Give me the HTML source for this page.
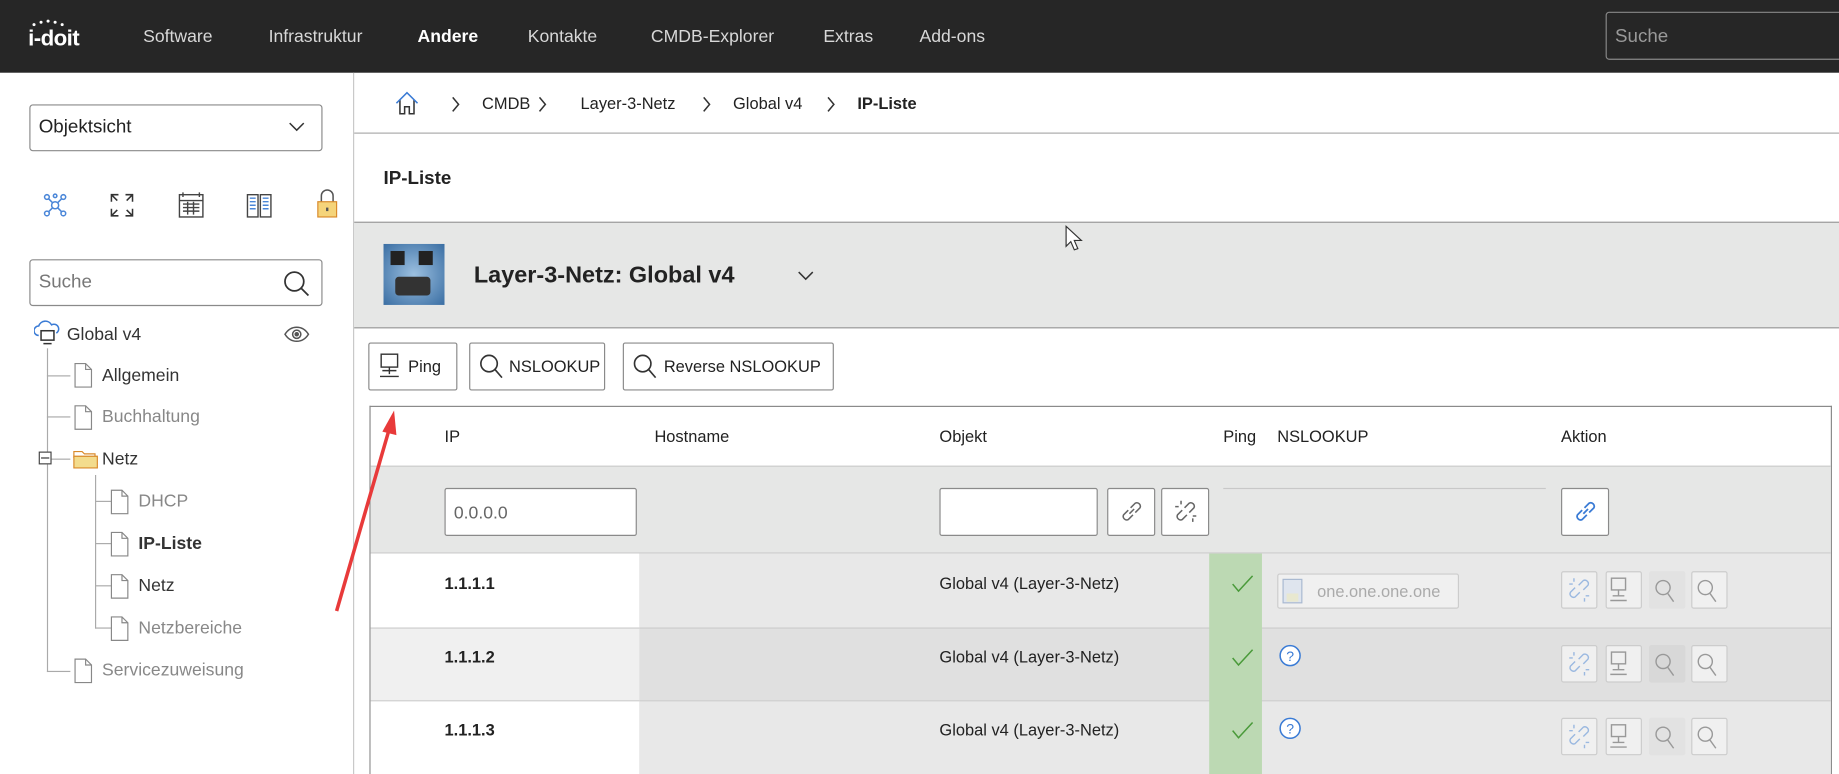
<!DOCTYPE html>
<html><head><meta charset="utf-8"><style>
html,body{margin:0;padding:0;width:1839px;height:774px;overflow:hidden;background:#fff}
#s{position:absolute;left:0;top:0;width:1568px;height:660px;transform:scale(1.17283);transform-origin:0 0;font-family:"Liberation Sans",sans-serif;font-size:15px;color:#222}
.a{position:absolute}
.t{position:absolute;white-space:nowrap;line-height:1}
.nav{color:#d8d8d8;font-size:15px;top:24px}
.box{position:absolute;border:1px solid #8a8a8a;border-radius:3px;background:#fff;box-sizing:border-box}
.btn{position:absolute;border:1px solid #8a8a8a;border-radius:2px;background:#fff;box-sizing:border-box}
.tr{color:#333}
.gray{color:#888}
.ln{position:absolute;background:#aaa}
.ib{position:absolute;width:31px;height:32px;border:1px solid #ccc;border-radius:2px;background:#f0f0f0;box-sizing:border-box}
</style></head><body><div id="s">
<div class="a" style="left:0;top:0;width:1568px;height:62px;background:#262626"></div>
<div class="t" style="left:24px;top:24px;color:#fff;font-size:19px;font-weight:bold;letter-spacing:-0.5px">i-doit</div>
<svg class="a" style="left:26px;top:16px" width="40" height="8"><circle cx="3" cy="5" r="1.3" fill="#fff"/><circle cx="9" cy="3" r="1.3" fill="#fff"/><circle cx="15" cy="2" r="1.3" fill="#fff"/><circle cx="21" cy="3" r="1.3" fill="#fff"/><circle cx="27" cy="5" r="1.3" fill="#fff"/></svg>
<div class="t nav" style="left:122px">Software</div>
<div class="t nav" style="left:229px">Infrastruktur</div>
<div class="t nav" style="left:356px;color:#fff;font-weight:bold">Andere</div>
<div class="t nav" style="left:450px">Kontakte</div>
<div class="t nav" style="left:555px">CMDB-Explorer</div>
<div class="t nav" style="left:702px">Extras</div>
<div class="t nav" style="left:784px">Add-ons</div>
<div class="a" style="left:1369px;top:10px;width:210px;height:41px;border:1px solid #888;border-radius:3px;box-sizing:border-box;background:#262626"></div>
<div class="t" style="left:1377px;top:24px;color:#999;font-size:16px">Suche</div>
<div class="a" style="left:301px;top:62px;width:1px;height:598px;background:#c8c8c8"></div>
<div class="box" style="left:25px;top:89px;width:250px;height:40px"></div>
<div class="t" style="left:33px;top:101px;font-size:16px">Objektsicht</div>
<svg class="a" style="left:246px;top:103px" width="14" height="10"><path d="M1 2l6 6 6-6" stroke="#333" fill="none" stroke-width="1.3"/></svg>
<svg class="a" style="left:36px;top:164px" width="22" height="22" fill="none" stroke="#4a86d8" stroke-width="1.3"><circle cx="11" cy="11" r="3"/><circle cx="4" cy="4" r="2"/><circle cx="18" cy="4" r="2"/><circle cx="4" cy="18" r="2"/><circle cx="18" cy="18" r="2"/><circle cx="11" cy="3" r="1.5"/><path d="M5.5 5.5l3.5 3.5M16.5 5.5l-3.5 3.5M5.5 16.5l3.5-3.5M16.5 16.5l-3.5-3.5"/></svg>
<svg class="a" style="left:93px;top:164px" width="22" height="22" fill="none" stroke="#333" stroke-width="1.3"><path d="M2 8V2h6M2 2l5 5M20 8V2h-6M20 2l-5 5M2 14v6h6M2 20l5-5M20 14v6h-6M20 20l-5-5"/></svg>
<svg class="a" style="left:151px;top:163px" width="24" height="24" fill="none" stroke="#444" stroke-width="1.2"><rect x="2" y="3" width="20" height="19"/><path d="M2 8h20M5 1v4M19 1v4M5 11h14M5 14h14M5 17h14M9 9v11M14 9v11"/></svg>
<svg class="a" style="left:209px;top:163px" width="24" height="24" fill="none" stroke="#444" stroke-width="1.2"><path d="M2 3h9v19H2zM13 3h9v19h-9z"/><path d="M4 6h5M4 9h5M4 12h5M4 15h5M15 6h5M15 9h5M15 12h5M15 15h5" stroke="#4a86d8"/></svg>
<svg class="a" style="left:269px;top:161px" width="20" height="26" fill="none"><path d="M5 11V6a5 5 0 0110 0v5" stroke="#555" stroke-width="1.3"/><rect x="2" y="11" width="16" height="13" fill="#f5d47a" stroke="#d98a2a"/><rect x="9" y="16" width="2" height="3" fill="#555"/></svg>
<div class="box" style="left:25px;top:221px;width:250px;height:40px"></div>
<div class="t" style="left:33px;top:233px;font-size:16px;color:#777">Suche</div>
<svg class="a" style="left:241px;top:230px" width="24" height="24" fill="none" stroke="#333" stroke-width="1.5"><circle cx="10" cy="10" r="8"/><path d="M16 16l6 6"/></svg>
<svg class="a" style="left:29px;top:273px" width="24" height="22" fill="none" stroke="#3a7bd5" stroke-width="1.3"><path d="M4 13a4 4 0 010-8 6 6 0 0111-1 4 4 0 014 7"/><rect x="6" y="9" width="11" height="8" stroke="#333"/><path d="M8 20h7" stroke="#333"/></svg>
<div class="t tr" style="left:57px;top:278px">Global v4</div>
<svg class="a" style="left:242px;top:278px" width="22" height="14" fill="none" stroke="#555" stroke-width="1.3"><path d="M1 7c5-8 15-8 20 0-5 8-15 8-20 0z"/><circle cx="11" cy="7" r="3.5"/><circle cx="11" cy="7" r="1.3" fill="#555"/></svg>
<div class="ln" style="left:40px;top:297px;width:1px;height:276px"></div>
<div class="ln" style="left:40px;top:572px;width:20px;height:1px"></div>
<div class="ln" style="left:40px;top:320px;width:20px;height:1px"></div>
<div class="ln" style="left:40px;top:355px;width:20px;height:1px"></div>
<div class="ln" style="left:40px;top:391px;width:20px;height:1px"></div>
<div class="a" style="left:33px;top:385px;width:11px;height:11px;border:1px solid #444;background:#fff;box-sizing:border-box"></div>
<div class="a" style="left:35px;top:390px;width:7px;height:1px;background:#333"></div>
<div class="ln" style="left:81px;top:405px;width:1px;height:131px"></div>
<div class="ln" style="left:81px;top:427px;width:20px;height:1px"></div>
<div class="ln" style="left:81px;top:463px;width:20px;height:1px"></div>
<div class="ln" style="left:81px;top:499px;width:20px;height:1px"></div>
<div class="ln" style="left:81px;top:535px;width:20px;height:1px"></div>
<svg width="0" height="0" style="position:absolute"><defs><g id="doc"><path d="M1 1h9l5 5v15H1z" fill="#fff" stroke="#888"/><path d="M10 1v5h5" fill="none" stroke="#888"/></g></defs></svg>
<svg class="a" style="left:63px;top:309px" width="16" height="22"><use href="#doc"/></svg>
<svg class="a" style="left:63px;top:345px" width="16" height="22"><use href="#doc"/></svg>
<svg class="a" style="left:63px;top:561px" width="16" height="22"><use href="#doc"/></svg>
<svg class="a" style="left:94px;top:417px" width="16" height="22"><use href="#doc"/></svg>
<svg class="a" style="left:94px;top:453px" width="16" height="22"><use href="#doc"/></svg>
<svg class="a" style="left:94px;top:489px" width="16" height="22"><use href="#doc"/></svg>
<svg class="a" style="left:94px;top:525px" width="16" height="22"><use href="#doc"/></svg>
<svg class="a" style="left:62px;top:381px" width="22" height="19"><path d="M1 4h7l2 2h9v3H1z" fill="#fff" stroke="#d98a2a"/><path d="M1 8h20v10H1z" fill="#f3dc8d" stroke="#d98a2a"/></svg>
<div class="t tr" style="left:87px;top:313px">Allgemein</div>
<div class="t gray" style="left:87px;top:348px">Buchhaltung</div>
<div class="t tr" style="left:87px;top:384px">Netz</div>
<div class="t gray" style="left:118px;top:420px">DHCP</div>
<div class="t tr" style="left:118px;top:456px;font-weight:bold">IP-Liste</div>
<div class="t tr" style="left:118px;top:492px">Netz</div>
<div class="t gray" style="left:118px;top:528px">Netzbereiche</div>
<div class="t gray" style="left:87px;top:564px">Servicezuweisung</div>
<svg class="a" style="left:336px;top:77px" width="22" height="22" fill="none" stroke="#333" stroke-width="1.3"><path d="M5 8v12h4v-6h4v6h4V8"/><path d="M2 11l9-9 9 9" stroke="#3a7bd5"/></svg>
<svg width="0" height="0" style="position:absolute"><defs><path id="chv" d="M1 1l5 6-5 6" stroke="#333" fill="none" stroke-width="1.3"/></defs></svg>
<svg class="a" style="left:385px;top:82px" width="8" height="14"><use href="#chv"/></svg>
<div class="t" style="left:411px;top:81px;font-size:14px">CMDB</div>
<svg class="a" style="left:459px;top:82px" width="8" height="14"><use href="#chv"/></svg>
<div class="t" style="left:495px;top:81px;font-size:14px">Layer-3-Netz</div>
<svg class="a" style="left:599px;top:82px" width="8" height="14"><use href="#chv"/></svg>
<div class="t" style="left:625px;top:81px;font-size:14px">Global v4</div>
<svg class="a" style="left:705px;top:82px" width="8" height="14"><use href="#chv"/></svg>
<div class="t" style="left:731px;top:81px;font-size:14px;font-weight:bold">IP-Liste</div>
<div class="a" style="left:302px;top:113px;width:1266px;height:1px;background:#aaa"></div>
<div class="t" style="left:327px;top:145px;font-size:16px;font-weight:bold">IP-Liste</div>
<div class="a" style="left:302px;top:189px;width:1266px;height:91px;background:#e6e7e6;border-top:1px solid #999;border-bottom:1px solid #999;box-sizing:border-box"></div>
<div class="a" style="left:327px;top:208px;width:52px;height:52px;background:radial-gradient(circle at 50% 50%,#9cc0e0,#3a6ea3)"></div>
<div class="a" style="left:337px;top:236px;width:30px;height:16px;background:#333;border-radius:3px"></div>
<div class="a" style="left:333px;top:214px;width:12px;height:12px;background:#222"></div>
<div class="a" style="left:357px;top:214px;width:12px;height:12px;background:#222"></div>
<div class="t" style="left:404px;top:225px;font-size:20px;font-weight:bold">Layer-3-Netz: Global v4</div>
<svg class="a" style="left:680px;top:230px" width="14" height="10"><path d="M1 2l6 6 6-6" stroke="#333" fill="none" stroke-width="1.3"/></svg>
<svg class="a" style="left:908px;top:192px" width="18" height="24"><path d="M1 1v17l4-4 3 7 3-1-3-7h6z" fill="#fff" stroke="#333"/></svg>
<div class="btn" style="left:314px;top:292px;width:76px;height:41px"></div>
<svg class="a" style="left:323px;top:301px" width="18" height="22" fill="none" stroke="#333" stroke-width="1.2"><rect x="2" y="1" width="14" height="11"/><path d="M9 12v6M3 15h12M1 20h16"/></svg>
<div class="t" style="left:348px;top:305px;font-size:14px">Ping</div>
<div class="btn" style="left:400px;top:292px;width:116px;height:41px"></div>
<svg class="a" style="left:408px;top:301px" width="22" height="24" fill="none" stroke="#333" stroke-width="1.4"><circle cx="9" cy="9" r="7"/><path d="M14 14l6 7"/></svg>
<div class="t" style="left:434px;top:305px;font-size:14px">NSLOOKUP</div>
<div class="btn" style="left:531px;top:292px;width:180px;height:41px"></div>
<svg class="a" style="left:539px;top:301px" width="22" height="24" fill="none" stroke="#333" stroke-width="1.4"><circle cx="9" cy="9" r="7"/><path d="M14 14l6 7"/></svg>
<div class="t" style="left:566px;top:305px;font-size:14px">Reverse NSLOOKUP</div>
<div class="a" style="left:315px;top:346px;width:1247px;height:314px;border:1px solid #888;border-bottom:none;box-sizing:border-box"></div>
<div class="t" style="left:379px;top:365px;font-size:14px">IP</div>
<div class="t" style="left:558px;top:365px;font-size:14px">Hostname</div>
<div class="t" style="left:801px;top:365px;font-size:14px">Objekt</div>
<div class="t" style="left:1043px;top:365px;font-size:14px">Ping</div>
<div class="t" style="left:1089px;top:365px;font-size:14px">NSLOOKUP</div>
<div class="t" style="left:1331px;top:365px;font-size:14px">Aktion</div>
<div class="a" style="left:316px;top:397px;width:1245px;height:75px;background:#e6e7e6;border-top:1px solid #ccc;border-bottom:1px solid #ccc;box-sizing:border-box"></div>
<div class="box" style="left:379px;top:416px;width:164px;height:41px;border-radius:2px"></div>
<div class="t" style="left:387px;top:430px;color:#666;font-size:15px">0.0.0.0</div>
<div class="box" style="left:801px;top:416px;width:135px;height:41px;border-radius:2px"></div>
<div class="btn" style="left:944px;top:416px;width:41px;height:41px"></div>
<svg class="a" style="left:954px;top:425px" width="22" height="22" fill="none" stroke="#666" stroke-width="1.3"><path d="M9 13l4-4M8 10l-4 4a3 3 0 004 4l4-4M14 12l4-4a3 3 0 00-4-4l-4 4"/></svg>
<div class="btn" style="left:990px;top:416px;width:41px;height:41px"></div>
<svg class="a" style="left:1000px;top:425px" width="22" height="22" fill="none" stroke="#666" stroke-width="1.3"><path d="M8 10l-4 4a3 3 0 004 4l4-4M14 12l4-4a3 3 0 00-4-4l-4 4M2 7h3M7 2v3M17 20v-3M20 15h-3"/></svg>
<div class="a" style="left:1043px;top:416px;width:275px;height:1px;background:#c8c8c8"></div>
<div class="btn" style="left:1331px;top:416px;width:41px;height:41px"></div>
<svg class="a" style="left:1341px;top:425px" width="22" height="22" fill="none" stroke="#3a7bd5" stroke-width="1.5"><path d="M9 13l4-4M8 10l-4 4a3 3 0 004 4l4-4M14 12l4-4a3 3 0 00-4-4l-4 4"/></svg>
<div class="a" style="left:316px;top:472px;width:229px;height:63px;background:#fff"></div>
<div class="a" style="left:545px;top:472px;width:1016px;height:63px;background:#e8e8e8"></div>
<div class="a" style="left:316px;top:535px;width:229px;height:62px;background:#f0f0f0;border-top:1px solid #ccc;box-sizing:border-box"></div>
<div class="a" style="left:545px;top:535px;width:1016px;height:62px;background:#e0e0e0;border-top:1px solid #ccc;box-sizing:border-box"></div>
<div class="a" style="left:316px;top:597px;width:229px;height:63px;background:#fff;border-top:1px solid #ccc;box-sizing:border-box"></div>
<div class="a" style="left:545px;top:597px;width:1016px;height:63px;background:#e8e8e8;border-top:1px solid #ccc;box-sizing:border-box"></div>
<div class="a" style="left:1031px;top:472px;width:45px;height:188px;background:#bcd9b3"></div>
<div class="t" style="left:379px;top:490px;font-size:14px;font-weight:bold">1.1.1.1</div>
<div class="t" style="left:379px;top:553px;font-size:14px;font-weight:bold">1.1.1.2</div>
<div class="t" style="left:379px;top:615px;font-size:14px;font-weight:bold">1.1.1.3</div>
<div class="t" style="left:801px;top:490px;font-size:14px">Global v4 (Layer-3-Netz)</div>
<div class="t" style="left:801px;top:553px;font-size:14px">Global v4 (Layer-3-Netz)</div>
<div class="t" style="left:801px;top:615px;font-size:14px">Global v4 (Layer-3-Netz)</div>
<svg class="a" style="left:1050px;top:490px" width="20" height="16"><path d="M1 8l5 6L18 1" stroke="#4a9a3a" fill="none" stroke-width="1.3"/></svg>
<svg class="a" style="left:1050px;top:553px" width="20" height="16"><path d="M1 8l5 6L18 1" stroke="#4a9a3a" fill="none" stroke-width="1.3"/></svg>
<svg class="a" style="left:1050px;top:615px" width="20" height="16"><path d="M1 8l5 6L18 1" stroke="#4a9a3a" fill="none" stroke-width="1.3"/></svg>
<div class="a" style="left:1089px;top:489px;width:155px;height:30px;background:#f0f0f0;border:1px solid #ccc;border-radius:2px;box-sizing:border-box"></div>
<svg class="a" style="left:1093px;top:493px" width="18" height="22"><rect x="1" y="1" width="16" height="20" fill="#dfe5ee" stroke="#a8b8d0"/><rect x="4" y="13" width="10" height="7" fill="#e8e8d0"/></svg>
<div class="t" style="left:1123px;top:497px;font-size:14px;color:#aaa">one.one.one.one</div>
<svg class="a" style="left:1090px;top:549px" width="20" height="20"><circle cx="10" cy="10" r="8.5" fill="#fff" stroke="#3a7bd5" stroke-width="1.3"/><text x="10" y="14.5" font-size="12" text-anchor="middle" fill="#3a7bd5" font-family="Liberation Sans">?</text></svg>
<svg class="a" style="left:1090px;top:611px" width="20" height="20"><circle cx="10" cy="10" r="8.5" fill="#fff" stroke="#3a7bd5" stroke-width="1.3"/><text x="10" y="14.5" font-size="12" text-anchor="middle" fill="#3a7bd5" font-family="Liberation Sans">?</text></svg>
<div class="ib" style="left:1331px;top:487px"></div><div class="ib" style="left:1369px;top:487px"></div><div class="ib" style="left:1406px;top:487px;background:#e2e2e2;border-color:#e2e2e2"></div><div class="ib" style="left:1442px;top:487px"></div>
<div class="ib" style="left:1331px;top:550px"></div><div class="ib" style="left:1369px;top:550px"></div><div class="ib" style="left:1406px;top:550px;background:#d8d8d8;border-color:#d8d8d8"></div><div class="ib" style="left:1442px;top:550px"></div>
<div class="ib" style="left:1331px;top:612px"></div><div class="ib" style="left:1369px;top:612px"></div><div class="ib" style="left:1406px;top:612px;background:#e2e2e2;border-color:#e2e2e2"></div><div class="ib" style="left:1442px;top:612px"></div>
<svg class="a" style="left:1331px;top:487px" width="160" height="160" fill="none" stroke-width="1.2">
<g id="r"><path d="M12 14l-4 4a3 3 0 004 4l4-4M19 16l4-4a3 3 0 00-4-4l-4 4M7 11h3M11 6v3M20 26v-3M24 21h-3" stroke="#9ab8e0"/><g stroke="#999"><rect x="43" y="6" width="12" height="10"/><path d="M49 16v5M44 21h10M42 25h14"/><circle cx="87" cy="14" r="6"/><path d="M91 19l5 7"/><circle cx="123" cy="14" r="6"/><path d="M127 19l5 7"/></g></g>
<use href="#r" y="63"/><use href="#r" y="125"/></svg>
<svg class="a" style="left:280px;top:340px" width="70" height="190"><path d="M7 181L53 22" stroke="#e83a3a" stroke-width="3"/><path d="M56 10l-10 18 12 3z" fill="#e83a3a"/></svg>
</div></body></html>
